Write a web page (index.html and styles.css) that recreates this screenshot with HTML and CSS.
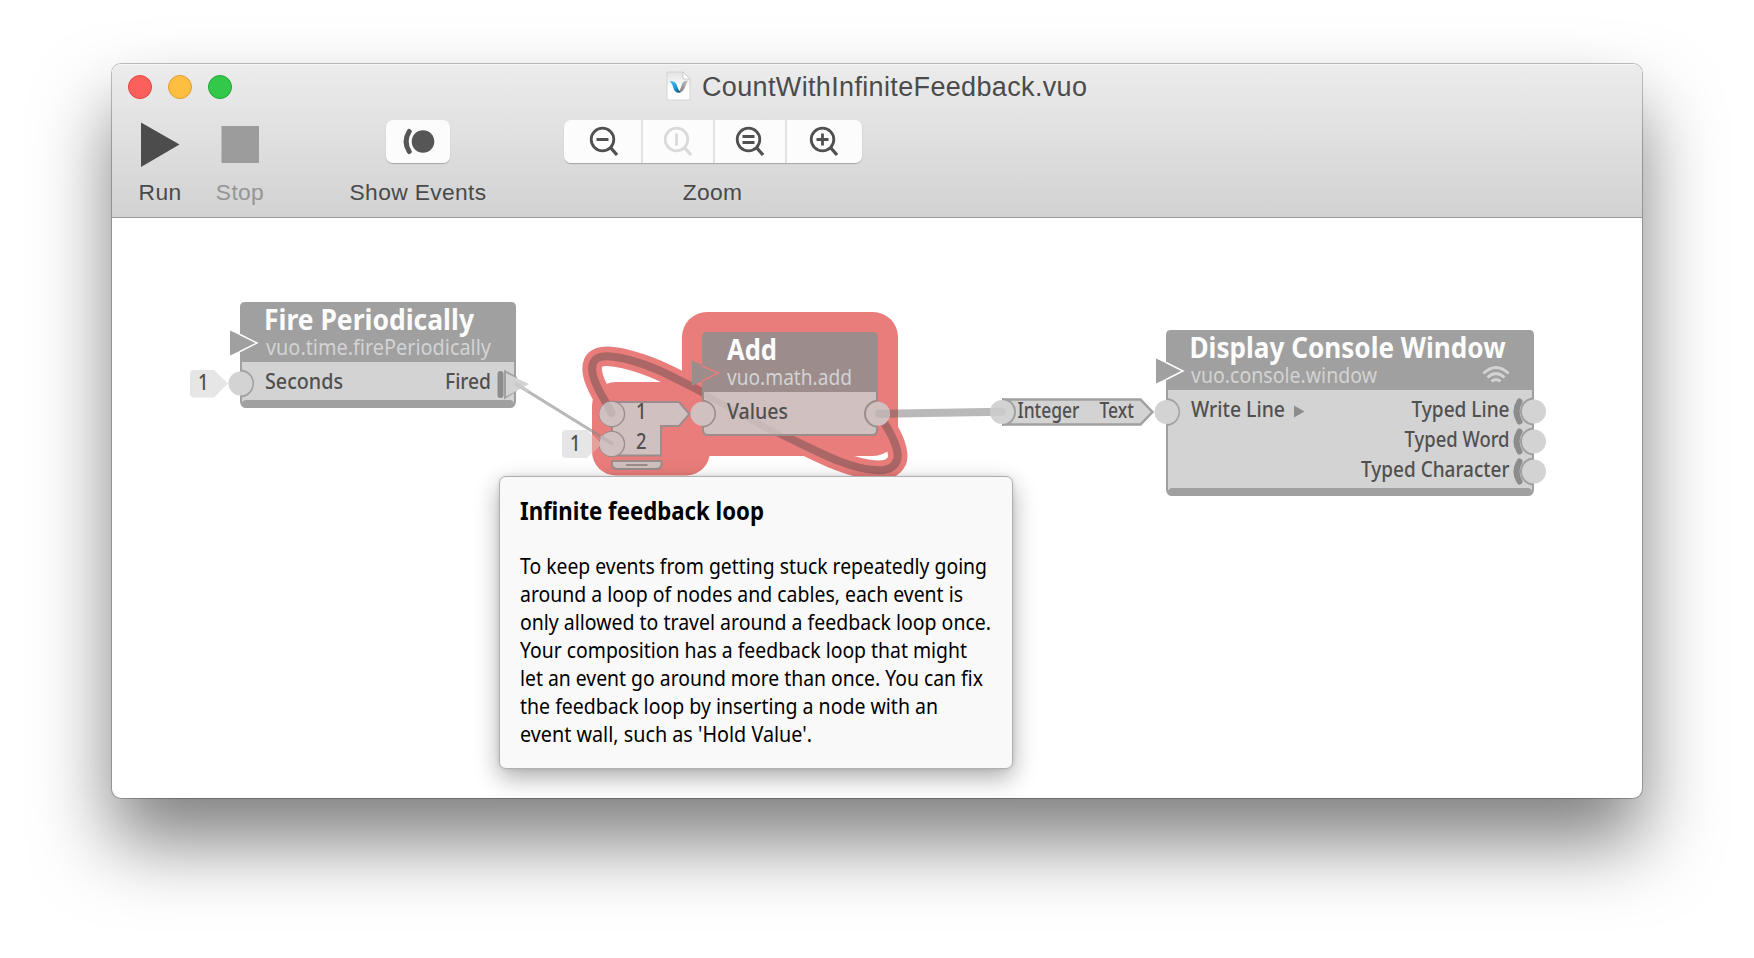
FILE: index.html
```html
<!DOCTYPE html>
<html lang="en">
<head>
<meta charset="utf-8">
<title>CountWithInfiniteFeedback.vuo</title>
<link rel="stylesheet" href="styles.css">
</head>
<body>
<main class="window">
  <header class="chrome">
    <div class="titlebar">
      <div class="lights"><i class="light close"></i><i class="light minimize"></i><i class="light expand"></i></div>
      <div class="title">
        <svg class="doc" width="25" height="30" viewBox="0 0 25 30">
          <defs>
            <linearGradient id="page" x1="0" y1="0" x2="0" y2="1"><stop offset="0" stop-color="#e3e3e3"/><stop offset=".6" stop-color="#fff"/></linearGradient>
            <linearGradient id="blue" x1="0" y1="0" x2="1" y2="1"><stop offset="0" stop-color="#5cc8f2"/><stop offset=".6" stop-color="#1695d0"/><stop offset="1" stop-color="#174a66"/></linearGradient>
            <linearGradient id="silver" x1="1" y1="0" x2="0" y2="1"><stop offset="0" stop-color="#c8c8c8"/><stop offset="1" stop-color="#777"/></linearGradient>
          </defs>
          <path d="M1 1H17L24 8V29H1Z" fill="url(#page)" stroke="#d4d4d4"/>
          <path d="M17 1V8H24Z" fill="#fff" stroke="#bdbdbd" stroke-width=".7"/>
          <path d="M13 21.500L16.500 12Q18 9.500 22 9.500Q20.500 12 19.500 15Q17.500 21 13 21.500Z" fill="url(#silver)"/>
          <path d="M3.500 10Q9 9.500 10.500 13.500Q11.500 17.500 14.500 21.500Q9 22.500 7.500 17.500Q6 12 3.500 10Z" fill="url(#blue)"/>
        </svg>
        <span class="title-text">CountWithInfiniteFeedback.vuo</span>
      </div>
    </div>
    <div class="toolbar">
      <div class="tool run">
        <svg class="glyph" width="40" height="46" viewBox="0 0 40 46"><path d="M1 .5L39.500 22.500L1 45Z" fill="#4c4c4c"/></svg>
        <span>Run</span>
      </div>
      <div class="tool stop">
        <svg class="glyph" width="38" height="46" viewBox="0 0 38 46"><path d="M.5 4H38V41H.5Z" fill="#9c9c9c"/></svg>
        <span>Stop</span>
      </div>
      <div class="tool events">
        <div class="buttons"><button class="btn"><svg width="64" height="43" viewBox="0 0 64 43"><circle cx="37" cy="21.500" r="11.300" fill="#565656"/><path d="M23.200 11.500Q17 21.500 23.200 31.500" fill="none" stroke="#565656" stroke-width="5" stroke-linecap="round"/></svg></button></div>
        <span>Show Events</span>
      </div>
      <div class="tool zoom">
        <div class="buttons">
          <button class="btn first"><svg class="mag" width="32" height="32" viewBox="0 0 32 32"><circle cx="13.500" cy="13.500" r="11.300"/><path d="M21 21L28 29" class="handle"/><path d="M7.500 13.500H19.500"/></svg></button>
          <button class="btn second"><svg class="mag off" width="32" height="32" viewBox="0 0 32 32"><circle cx="13.500" cy="13.500" r="11.300"/><path d="M21 21L28 29" class="handle"/><path d="M13.500 7.500V19.500"/></svg></button>
          <button class="btn third"><svg class="mag" width="32" height="32" viewBox="0 0 32 32"><circle cx="13.500" cy="13.500" r="11.300"/><path d="M21 21L28 29" class="handle"/><path d="M7.500 10.500H19.500M7.500 16.500H19.500"/></svg></button>
          <button class="btn fourth"><svg class="mag" width="32" height="32" viewBox="0 0 32 32"><circle cx="13.500" cy="13.500" r="11.300"/><path d="M21 21L28 29" class="handle"/><path d="M7.500 13.500H19.500M13.500 7.500V19.500"/></svg></button>
        </div>
        <span>Zoom</span>
      </div>
    </div>
  </header>

  <svg class="canvas" width="1530" height="580" viewBox="112 218 1530 580">
    <!-- feedback highlight -->
    <g class="hot">
      <rect x="682" y="312" width="216" height="144" rx="25"/>
      <rect x="592" y="382" width="118" height="93.500" rx="24"/>
    </g>
    <path class="halo" d="M612.500 414L601.500 395C596 385 593.500 380 592.500 373C590.500 360 597 356 608 356.300C622 357 640 362.500 658 370C690 384 745 416 790 438.500C820 453 850 469 877 470.300C893 471 899 462 897.500 453C896 441 888 428 878.500 414"/>
    <path class="loop" d="M612.500 414L601.500 395C596 385 593.500 380 592.500 373C590.500 360 597 356 608 356.300C622 357 640 362.500 658 370C690 384 745 416 790 438.500C820 453 850 469 877 470.300C893 471 899 462 897.500 453C896 441 888 428 878.500 414"/>

    <!-- cables -->
    <path d="M516 384L612 443.500" class="cable slim"/>
    <path d="M898 413.600L1002 411.700" class="cable"/>
    <path d="M880 414L898 413.600" class="cable warm-cable"/>

    <!-- Fire Periodically -->
    <g>
      <path class="edge" d="M240 307Q240 302 245 302H511Q516 302 516 307V402Q515 408 510 408H246Q241 408 240 402Z"/>
      <path class="body" d="M242 362H514V403Q513 400 510 400H246Q243 400 242 403Z"/>
      <path class="trigger" d="M230 330.500L257 343L230 355.500Z"/>
      <path class="trigger-line" d="M240 334.500L257 343L240 351.500"/>
      <path class="edge" d="M240 369.500A14 14 0 0 1 240 397.500Z"/>
      <circle class="port" cx="240.500" cy="383.500" r="12"/>
      <rect x="497.500" y="371" width="6" height="27" rx="3" class="wall"/>
      <path class="edge" d="M504 369.500L517 377V391L504 399.500Z"/>
      <path class="port" d="M506 373L529 384L506 396.500Z"/>
      <path d="M516 384L527 390.800" class="tip thin-tip"/>
      <path class="constant" d="M194 370H214L228 383.500L214 397.500H194Q190 397.500 190 393.500V374Q190 370 194 370Z"/>
      <text class="name" x="264" y="330" textLength="210" lengthAdjust="spacingAndGlyphs">Fire Periodically</text>
      <text class="class" x="266" y="355" textLength="225" lengthAdjust="spacingAndGlyphs">vuo.time.firePeriodically</text>
      <text class="label" x="265" y="389" textLength="78" lengthAdjust="spacingAndGlyphs">Seconds</text>
      <text class="label" x="445" y="389" textLength="46" lengthAdjust="spacingAndGlyphs">Fired</text>
      <text class="label" x="198" y="390" textLength="10.500" lengthAdjust="spacingAndGlyphs">1</text>
    </g>

    <!-- Add, with its list drawer -->
    <g class="warm">
      <path class="edge" d="M702 337Q702 332 707 332H873Q878 332 878 337V430Q878 436 872 436H708Q702 436 702 430Z"/>
      <path class="body" d="M704 392H876V430Q876 434 872 434H708Q704 434 704 430Z"/>
      <path class="shade" d="M704 392H707C735 407 760 421 784 434H771C750 423 724 408 704 398Z"/>
      <path class="edge" d="M692 360.500L719 373L692 386Z"/>
      <path class="trigger-line" d="M702 366L718.500 373L702 381"/>
      <path class="body outline" d="M612 402H679L689.500 414L679 426H661V455.500H612Z"/>
      <path class="body outline" d="M612 461H661.500V464Q661.500 469 656 469H618Q612 469 612 464Z"/>
      <path d="M626 465H647.500" stroke="#9c8c8b" stroke-width="2"/>
      <circle class="body outline thin" cx="612" cy="414" r="12.500"/>
      <circle class="body outline thin" cx="612" cy="444" r="12.500"/>
      <circle class="body" cx="611.500" cy="414" r="12"/>
      <circle class="body" cx="611.500" cy="444" r="12"/>
      <path class="edge" d="M702 399.700A14 14 0 0 1 702 427.700ZM878 399.700A14 14 0 0 0 878 427.700Z"/>
      <circle class="body" cx="702.500" cy="413.700" r="12"/>
      <circle class="body" cx="878" cy="413.700" r="12"/>
      <path d="M608 406.500L611.500 413" class="stub"/>
      <path d="M602 437.500L612 443.500" class="stub thin-tip"/>
      <path d="M879 413.700H886" class="stub"/>
      <path class="constant" d="M566 430H587L601 444L587 458H566Q562 458 562 454V434Q562 430 566 430Z"/>
      <path d="M592 435L601 444L592 453Z" fill="#e5a09e"/>
      <text class="name" x="727" y="360" textLength="50" lengthAdjust="spacingAndGlyphs">Add</text>
      <text class="class" x="727" y="385" textLength="125" lengthAdjust="spacingAndGlyphs">vuo.math.add</text>
      <text class="label" x="727" y="419" textLength="61" lengthAdjust="spacingAndGlyphs">Values</text>
      <text class="label" x="636" y="419" textLength="10.500" lengthAdjust="spacingAndGlyphs">1</text>
      <text class="label" x="636" y="449" textLength="10.500" lengthAdjust="spacingAndGlyphs">2</text>
      <text class="label" x="570" y="451" textLength="10.500" lengthAdjust="spacingAndGlyphs">1</text>
    </g>

    <!-- Integer to Text converter -->
    <g>
      <path class="outline-gray" d="M1006 399.500H1140.500L1152.500 412L1140.500 424.500H1006Z"/>
      <path class="edge" d="M1002 398A14 14 0 0 1 1002 426Z"/>
      <circle class="port" cx="1002" cy="412" r="12"/>
      <path d="M994 411.800L1002 411.700" class="tip"/>
      <text class="label" x="1017.500" y="417.500" textLength="62" lengthAdjust="spacingAndGlyphs">Integer</text>
      <text class="label" x="1099.500" y="417.500" textLength="34.500" lengthAdjust="spacingAndGlyphs">Text</text>
    </g>

    <!-- Display Console Window -->
    <g>
      <path class="edge" d="M1166 335Q1166 330 1171 330H1529Q1534 330 1534 335V490Q1533 496 1528 496H1172Q1167 496 1166 490Z"/>
      <path class="body-gray" d="M1168 390H1532V491Q1531 488 1528 488H1172Q1169 488 1168 491Z"/>
      <path class="trigger" d="M1156 358.500L1183 371L1156 383.500Z"/>
      <path class="trigger-line" d="M1166 362.500L1183 371L1166 379.500"/>
      <path class="edge" d="M1166 398A14 14 0 0 1 1166 426ZM1534 397.500A14 14 0 0 0 1534 425.500ZM1534 427.500A14 14 0 0 0 1534 455.500ZM1534 457.500A14 14 0 0 0 1534 485.500Z"/>
      <circle class="port" cx="1166.500" cy="412" r="12"/>
      <circle class="port" cx="1534" cy="411.500" r="12"/>
      <circle class="port" cx="1534" cy="441.500" r="12"/>
      <circle class="port" cx="1534" cy="471.500" r="12"/>
      <path class="arc" d="M1519.500 401.500Q1513.500 411.500 1519.500 421.500M1519.500 431.500Q1513.500 441.500 1519.500 451.500M1519.500 461.500Q1513.500 471.500 1519.500 481.500"/>
      <path d="M1294 405.500L1304.500 411.500L1294 417.500Z" fill="#8c8c8c"/>
      <g fill="none" stroke="#d3d3d3" stroke-width="3"><path d="M1483.500 373.500Q1496 361.500 1508.500 373.500M1487.500 377.500Q1496 369.500 1504.500 377.500M1491.500 381.500Q1496 377.500 1500.500 381.500"/></g>
      <text class="name" x="1189.500" y="358" textLength="316" lengthAdjust="spacingAndGlyphs">Display Console Window</text>
      <text class="class" x="1191" y="383" textLength="186" lengthAdjust="spacingAndGlyphs">vuo.console.window</text>
      <text class="label" x="1191" y="417" textLength="94" lengthAdjust="spacingAndGlyphs">Write Line</text>
      <text class="label" x="1411.500" y="417" textLength="98" lengthAdjust="spacingAndGlyphs">Typed Line</text>
      <text class="label" x="1404.500" y="447" textLength="105" lengthAdjust="spacingAndGlyphs">Typed Word</text>
      <text class="label" x="1361" y="477" textLength="148.500" lengthAdjust="spacingAndGlyphs">Typed Character</text>
    </g>
  </svg>

  <aside class="popover">
    <svg width="512" height="291" viewBox="500 477.500 512 291">
      <text class="heading" x="520" y="520.500" textLength="244" lengthAdjust="spacingAndGlyphs">Infinite feedback loop</text>
      <g class="copy">
        <text x="520" y="574" textLength="467" lengthAdjust="spacingAndGlyphs">To keep events from getting stuck repeatedly going</text>
        <text x="520" y="602" textLength="443" lengthAdjust="spacingAndGlyphs">around a loop of nodes and cables, each event is</text>
        <text x="520" y="630" textLength="471" lengthAdjust="spacingAndGlyphs">only allowed to travel around a feedback loop once.</text>
        <text x="520" y="658" textLength="447" lengthAdjust="spacingAndGlyphs">Your composition has a feedback loop that might</text>
        <text x="520" y="686" textLength="463" lengthAdjust="spacingAndGlyphs">let an event go around more than once. You can fix</text>
        <text x="520" y="714" textLength="418" lengthAdjust="spacingAndGlyphs">the feedback loop by inserting a node with an</text>
        <text x="520" y="742" textLength="292" lengthAdjust="spacingAndGlyphs">event wall, such as 'Hold Value'.</text>
      </g>
    </svg>
  </aside>
</main>
</body>
</html>
```
FILE: styles.css
```css
* { box-sizing: border-box; }
body { margin: 0; width: 1754px; height: 958px; overflow: hidden; background: #fff; padding: 64px 112px 0; font-family: "Liberation Sans", Arial, sans-serif; }
.window { position: relative; width: 1530px; height: 734px; border-radius: 9px; background: #fff; box-shadow: 0 0 0 1px rgba(0,0,0,.24), 0 44px 76px rgba(0,0,0,.5); }
.chrome { height: 154px; border-radius: 9px 9px 0 0; background: linear-gradient(#ececec, #d2d2d2); border-top: 1px solid #f6f6f6; border-bottom: 1px solid #999; }
.titlebar { height: 43px; display: flex; align-items: center; }
.lights { display: flex; gap: 16px; padding-left: 16px; width: 554px; }
.light { width: 24px; height: 24px; border-radius: 50%; border: 1px solid; }
.close { background: #fc605c; border-color: #e0443f; }
.minimize { background: #fdbe41; border-color: #df9f33; }
.expand { background: #34c84a; border-color: #21a536; }
.doc { margin-top: -2px; }
.title { display: flex; align-items: center; gap: 11px; }
.title-text { padding-top: 1px; font-size: 27px; letter-spacing: .35px; color: #4b4b4b; white-space: nowrap; }
.toolbar { display: flex; padding-top: 12px; color: #4a4a4a; font-size: 22.800px; letter-spacing: .35px; }
.tool { display: flex; flex-direction: column; align-items: center; white-space: nowrap; }
.glyph { margin-top: 2px; }
.tool span { height: 26px; line-height: 26px; }
.glyph + span { margin-top: 11px; }
.buttons + span { margin-top: 16px; }
.run { margin-left: 18px; width: 60px; }
.stop { margin-left: 18px; width: 64px; color: #959595; }
.events { margin-left: 73px; width: 146px; }
.zoom { margin-left: 73px; width: 298px; }
.zoom span { padding-right: 1px; }
.buttons { display: flex; gap: 2px; height: 43px; border-radius: 7px; overflow: hidden; background: #e2e2e2; box-shadow: 0 1px 1px rgba(0,0,0,.25); }
.btn { display: flex; align-items: center; border: 0; padding: 0; height: 43px; background: #fcfcfc; }
.first { width: 77px; padding-left: 25px; }
.second { width: 70px; padding-left: 20px; }
.third { width: 70px; padding-left: 20px; }
.fourth { width: 75px; padding-left: 22px; }
.mag { fill: none; stroke: #505050; stroke-width: 2.800; }
.mag .handle { stroke-width: 3.300; }
.off { stroke: #dadada; }
.canvas { display: block; border-radius: 0 0 8px 8px; font-family: "Noto Sans", "Open Sans", sans-serif; }
.hot { fill: #e97d7b; }
.halo { fill: none; stroke: #e97d7b; stroke-width: 19.500; }
.loop { fill: none; stroke: #ab6666; stroke-width: 8; stroke-linecap: round; }
.edge, .trigger { fill: #a0a0a0; }
.body, .body-gray, .port { fill: #d3d3d3; }
.wall { fill: #8c8c8c; }
.arc { fill: none; stroke: #8c8c8c; stroke-width: 6; stroke-linecap: round; }
.constant { fill: #e6e6e6; }
.trigger-line { fill: none; stroke: #fff; stroke-width: 1.500; }
.outline-gray { fill: #d3d3d3; stroke: #a0a0a0; stroke-width: 2.500; }
.warm .edge { fill: #9c8c8b; }
.warm .body { fill: #d0c1c0; }
.warm .outline { stroke: #9c8c8b; stroke-width: 2; }
.warm .thin { stroke-width: 1.500; }
.warm .trigger-line { stroke: #e97d7b; }
.shade { fill: #c8b9b8; }
.stub { stroke: #c0b5b4; stroke-width: 8; stroke-linecap: round; }
.tip { stroke: #cacaca; stroke-width: 8; stroke-linecap: round; }
.stub.thin-tip, .thin-tip { stroke-width: 3.500; }
.cable { fill: none; stroke: #b9b9b9; stroke-width: 8; }
.warm-cable { stroke: #ab6f6e; }
.slim { stroke: #888; stroke-opacity: .6; stroke-width: 3.200; }
.name { font-size: 28px; font-weight: 700; fill: #fcfcfc; }
.class { font-size: 22px; fill: #d3d3d3; }
.label { font-size: 22px; font-weight: 500; fill: #505050; }
.popover { position: absolute; left: 387px; top: 412px; width: 514px; height: 293px; border-radius: 7px; background: #f9f9f9; border: 1px solid #b0b0b0; box-shadow: 0 9px 24px rgba(0,0,0,.32), 0 0 5px rgba(0,0,0,.1); font-family: "Noto Sans", "Open Sans", sans-serif; }
.popover svg { display: block; overflow: visible; }
.heading { font-size: 25px; font-weight: 700; }
.copy { font-size: 21px; }
```
